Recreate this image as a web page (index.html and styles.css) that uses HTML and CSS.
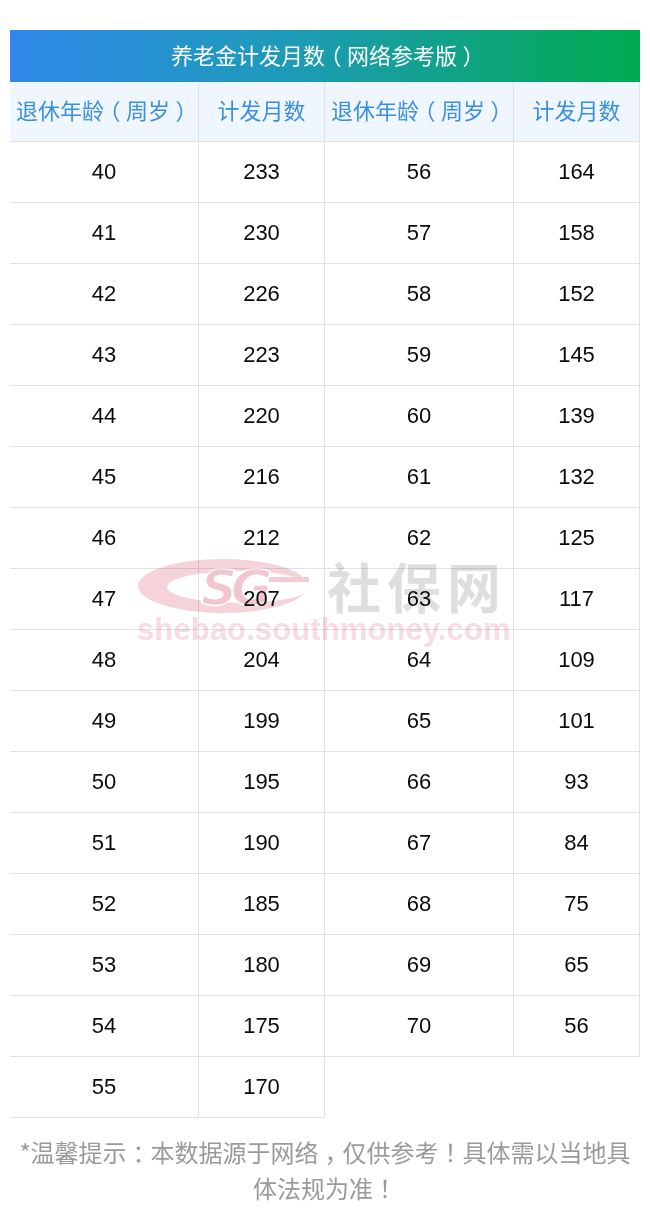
FILE: index.html
```html
<!DOCTYPE html>
<html lang="zh-CN">
<head>
<meta charset="utf-8">
<title>养老金计发月数</title>
<link rel="stylesheet" href="styles.css">
</head>
<body>
<div class="page">
  <div class="title">养老金计发月数<span class="pp">（</span>网络参考版<span class="pp">）</span></div>
  <div class="table">
    <div class="grid">
      <div class="th">退休年龄<span class="pp">（</span>周岁<span class="pp">）</span></div><div class="th">计发月数</div><div class="th">退休年龄<span class="pp">（</span>周岁<span class="pp">）</span></div><div class="th">计发月数</div>
      <div class="td">40</div><div class="td">233</div><div class="td">56</div><div class="td">164</div>
      <div class="td">41</div><div class="td">230</div><div class="td">57</div><div class="td">158</div>
      <div class="td">42</div><div class="td">226</div><div class="td">58</div><div class="td">152</div>
      <div class="td">43</div><div class="td">223</div><div class="td">59</div><div class="td">145</div>
      <div class="td">44</div><div class="td">220</div><div class="td">60</div><div class="td">139</div>
      <div class="td">45</div><div class="td">216</div><div class="td">61</div><div class="td">132</div>
      <div class="td">46</div><div class="td">212</div><div class="td">62</div><div class="td">125</div>
      <div class="td">47</div><div class="td">207</div><div class="td">63</div><div class="td">117</div>
      <div class="td">48</div><div class="td">204</div><div class="td">64</div><div class="td">109</div>
      <div class="td">49</div><div class="td">199</div><div class="td">65</div><div class="td">101</div>
      <div class="td">50</div><div class="td">195</div><div class="td">66</div><div class="td">93</div>
      <div class="td">51</div><div class="td">190</div><div class="td">67</div><div class="td">84</div>
      <div class="td">52</div><div class="td">185</div><div class="td">68</div><div class="td">75</div>
      <div class="td">53</div><div class="td">180</div><div class="td">69</div><div class="td">65</div>
      <div class="td">54</div><div class="td">175</div><div class="td">70</div><div class="td">56</div>
      <div class="td">55</div><div class="td">170</div>
    </div>
    <div class="watermark">
      <div class="wm-top">
        <svg class="wm-logo" width="174" height="58" viewBox="0 0 174 58">
          <ellipse cx="86" cy="29" rx="85" ry="27" fill="#f4ccd3"/>
          <ellipse cx="102" cy="30" rx="72" ry="16" fill="#ffffff"/>
          <rect x="132" y="20" width="40" height="5" fill="#f1c2cb"/>
          <text x="64" y="48" class="wm-sg">SG</text>
        </svg>
        <span class="wm-cn">社保网</span>
      </div>
      <div class="wm-url">shebao.southmoney.com</div>
    </div>
  </div>
  <p class="note">*温馨提示<span class="pp">：</span>本数据源于网络<span class="pp">，</span>仅供参考<span class="pp">！</span>具体需以当地具体法规为准<span class="pp">！</span></p>
</div>
</body>
</html>
```
FILE: styles.css
```css
html, body {
  margin: 0;
  padding: 0;
  background: #ffffff;
}
.page {
  width: 630px;
  padding: 30px 10px 0;
  font-family: "Liberation Sans", "Noto Sans CJK SC", sans-serif;
}
.title {
  height: 52px;
  display: flex;
  align-items: center;
  justify-content: center;
  background: linear-gradient(90deg, #2f88eb 0%, #1d9bb6 45%, #00ab4f 100%);
  color: #ffffff;
  font-family: "Noto Sans CJK SC", sans-serif;
  font-size: 22px;
  padding-bottom: 4px;
  box-sizing: border-box;
  white-space: nowrap;
}
.pp {
  display: inline-block;
  width: 1em;
  text-align: center;
  font-feature-settings: "halt";
}
.table {
  position: relative;
}
.grid {
  display: grid;
  grid-template-columns: 189px 126px 189px 126px;
}
.th, .td {
  display: flex;
  align-items: center;
  justify-content: center;
  border-right: 1px solid #dfe1eb;
  border-bottom: 1px solid #dfe1eb;
  box-sizing: border-box;
}
.th {
  height: 60px;
  background: #f0f6fe;
  color: #3b8fe3;
  font-family: "Noto Sans CJK SC", sans-serif;
  font-size: 22px;
  white-space: nowrap;
  padding-bottom: 5px;
}
.td {
  height: 61px;
  color: #0a0a0a;
  font-size: 22px;
}
.watermark {
  position: absolute;
  left: 127px;
  top: 475px;
  pointer-events: none;
  mix-blend-mode: multiply;
  opacity: 0.85;
}
.wm-top {
  display: flex;
  align-items: center;
  gap: 16px;
  height: 58px;
}
.wm-logo {
  display: block;
  overflow: visible;
}
.wm-sg {
  font-family: "DejaVu Sans", sans-serif;
  font-style: italic;
  font-weight: 700;
  font-size: 50px;
  fill: #f0bcc6;
  stroke: #ffffff;
  stroke-width: 1.5px;
  letter-spacing: -6px;
}
.wm-cn {
  font-family: "Noto Sans CJK SC", sans-serif;
  font-weight: 700;
  font-size: 54px;
  line-height: 58px;
  letter-spacing: 6px;
  color: #d9d9d9;
}
.wm-url {
  font-family: "Liberation Sans", sans-serif;
  font-weight: 700;
  font-size: 31px;
  line-height: 30px;
  letter-spacing: 0.1px;
  color: #f7d6dc;
}
.note {
  margin: 16px 0 0;
  text-align: center;
  color: #9a9a9a;
  font-family: "Noto Sans CJK SC", sans-serif;
  font-size: 24px;
  line-height: 36px;
}
```
